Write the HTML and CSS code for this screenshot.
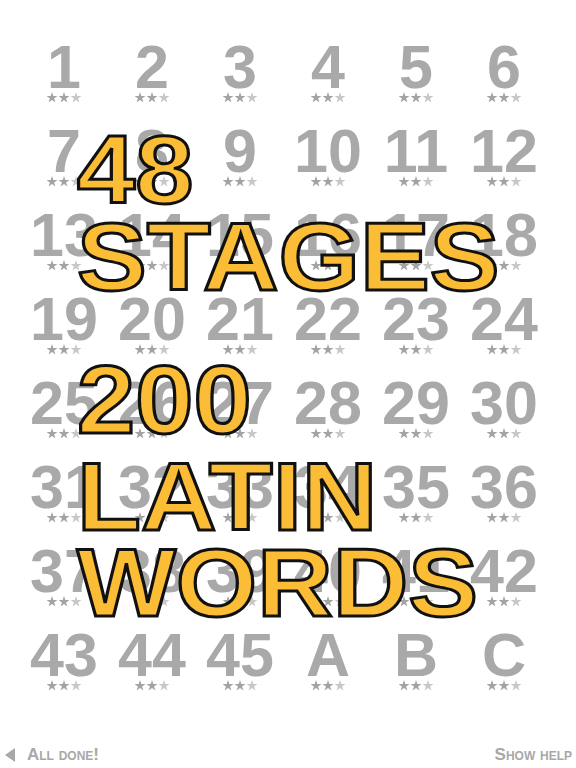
FILE: index.html
```html
<!DOCTYPE html>
<html>
<head>
<meta charset="utf-8">
<link rel="stylesheet" href="styles.css">
</head>
<body>
<div class="page">
  <div class="grid">
    <div class="cell"><div class="num">1</div><div class="st"><b></b><b></b><b class="d"></b></div></div>
    <div class="cell"><div class="num">2</div><div class="st"><b></b><b></b><b class="d"></b></div></div>
    <div class="cell"><div class="num">3</div><div class="st"><b></b><b></b><b class="d"></b></div></div>
    <div class="cell"><div class="num">4</div><div class="st"><b></b><b></b><b class="d"></b></div></div>
    <div class="cell"><div class="num">5</div><div class="st"><b></b><b></b><b class="d"></b></div></div>
    <div class="cell"><div class="num">6</div><div class="st"><b></b><b></b><b class="d"></b></div></div>
    <div class="cell"><div class="num">7</div><div class="st"><b></b><b></b><b class="d"></b></div></div>
    <div class="cell"><div class="num">8</div><div class="st"><b></b><b></b><b class="d"></b></div></div>
    <div class="cell"><div class="num">9</div><div class="st"><b></b><b></b><b class="d"></b></div></div>
    <div class="cell"><div class="num">10</div><div class="st"><b></b><b></b><b class="d"></b></div></div>
    <div class="cell"><div class="num">11</div><div class="st"><b></b><b></b><b class="d"></b></div></div>
    <div class="cell"><div class="num">12</div><div class="st"><b></b><b></b><b class="d"></b></div></div>
    <div class="cell"><div class="num">13</div><div class="st"><b></b><b></b><b class="d"></b></div></div>
    <div class="cell"><div class="num">14</div><div class="st"><b></b><b></b><b class="d"></b></div></div>
    <div class="cell"><div class="num">15</div><div class="st"><b></b><b></b><b class="d"></b></div></div>
    <div class="cell"><div class="num">16</div><div class="st"><b></b><b></b><b class="d"></b></div></div>
    <div class="cell"><div class="num">17</div><div class="st"><b></b><b></b><b class="d"></b></div></div>
    <div class="cell"><div class="num">18</div><div class="st"><b></b><b></b><b class="d"></b></div></div>
    <div class="cell"><div class="num">19</div><div class="st"><b></b><b></b><b class="d"></b></div></div>
    <div class="cell"><div class="num">20</div><div class="st"><b></b><b></b><b class="d"></b></div></div>
    <div class="cell"><div class="num">21</div><div class="st"><b></b><b></b><b class="d"></b></div></div>
    <div class="cell"><div class="num">22</div><div class="st"><b></b><b></b><b class="d"></b></div></div>
    <div class="cell"><div class="num">23</div><div class="st"><b></b><b></b><b class="d"></b></div></div>
    <div class="cell"><div class="num">24</div><div class="st"><b></b><b></b><b class="d"></b></div></div>
    <div class="cell"><div class="num">25</div><div class="st"><b></b><b></b><b class="d"></b></div></div>
    <div class="cell"><div class="num">26</div><div class="st"><b></b><b></b><b class="d"></b></div></div>
    <div class="cell"><div class="num">27</div><div class="st"><b></b><b></b><b class="d"></b></div></div>
    <div class="cell"><div class="num">28</div><div class="st"><b></b><b></b><b class="d"></b></div></div>
    <div class="cell"><div class="num">29</div><div class="st"><b></b><b></b><b class="d"></b></div></div>
    <div class="cell"><div class="num">30</div><div class="st"><b></b><b></b><b class="d"></b></div></div>
    <div class="cell"><div class="num">31</div><div class="st"><b></b><b></b><b class="d"></b></div></div>
    <div class="cell"><div class="num">32</div><div class="st"><b></b><b></b><b class="d"></b></div></div>
    <div class="cell"><div class="num">33</div><div class="st"><b></b><b></b><b class="d"></b></div></div>
    <div class="cell"><div class="num">34</div><div class="st"><b></b><b></b><b class="d"></b></div></div>
    <div class="cell"><div class="num">35</div><div class="st"><b></b><b></b><b class="d"></b></div></div>
    <div class="cell"><div class="num">36</div><div class="st"><b></b><b></b><b class="d"></b></div></div>
    <div class="cell"><div class="num">37</div><div class="st"><b></b><b></b><b class="d"></b></div></div>
    <div class="cell"><div class="num">38</div><div class="st"><b></b><b></b><b class="d"></b></div></div>
    <div class="cell"><div class="num">39</div><div class="st"><b></b><b></b><b class="d"></b></div></div>
    <div class="cell"><div class="num">40</div><div class="st"><b></b><b></b><b class="d"></b></div></div>
    <div class="cell"><div class="num">41</div><div class="st"><b></b><b></b><b class="d"></b></div></div>
    <div class="cell"><div class="num">42</div><div class="st"><b></b><b></b><b class="d"></b></div></div>
    <div class="cell"><div class="num">43</div><div class="st"><b></b><b></b><b class="d"></b></div></div>
    <div class="cell"><div class="num">44</div><div class="st"><b></b><b></b><b class="d"></b></div></div>
    <div class="cell"><div class="num">45</div><div class="st"><b></b><b></b><b class="d"></b></div></div>
    <div class="cell"><div class="num">A</div><div class="st"><b></b><b></b><b class="d"></b></div></div>
    <div class="cell"><div class="num">B</div><div class="st"><b></b><b></b><b class="d"></b></div></div>
    <div class="cell"><div class="num">C</div><div class="st"><b></b><b></b><b class="d"></b></div></div>
  </div>

  <div class="banner">
    <div class="line">48</div>
    <div class="line">STAGES</div>
    <div class="line l200">200</div>
    <div class="line llatin">LATIN</div>
    <div class="line lwords">WORDS</div>
  </div>

  <div class="bar">
    <div class="back"><span class="tri"></span><span class="lbl">All done!</span></div>
    <div class="help">Show help</div>
  </div>
</div>
</body>
</html>
```
FILE: styles.css
```css
html, body {
  margin: 0;
  padding: 0;
  background: #ffffff;
}
.page {
  position: relative;
  width: 576px;
  height: 768px;
  overflow: hidden;
  font-family: "Liberation Sans", Arial, sans-serif;
}
.grid {
  display: grid;
  grid-template-columns: repeat(6, 88px);
  grid-auto-rows: 84px;
  padding: 42px 0 0 20px;
}
.cell {
  display: flex;
  flex-direction: column;
  align-items: center;
}
.num {
  font-size: 61px;
  line-height: 50px;
  font-weight: bold;
  color: #a9a9a9;
}
.st {
  display: flex;
  gap: 1px;
  margin-top: 0;
}
.st b {
  display: block;
  width: 11px;
  height: 11px;
  background: #a3a3a3;
  clip-path: polygon(50% 0%, 62% 36%, 100% 36%, 69% 58%, 81% 95%, 50% 72%, 19% 95%, 31% 58%, 0% 36%, 38% 36%);
}
.st b.d {
  background: #c8c8c8;
}
.banner {
  position: absolute;
  left: 77px;
  top: 126px;
  font-size: 96px;
  font-weight: bold;
  line-height: 87px;
  color: #fcbd36;
  -webkit-text-stroke: 3px #111111;
  transform: scaleX(1.09);
  transform-origin: 0 0;
}
.l200 { margin-top: 56px; }
.llatin { margin-top: 10px; }
.lwords { margin-top: -1px; }
.bar {
  display: flex;
  justify-content: space-between;
  align-items: flex-end;
  padding: 32px 4px 0 5px;
  color: #a8a8a8;
  font-size: 17px;
  line-height: 17px;
  font-weight: bold;
  font-variant: small-caps;
}
.back {
  display: flex;
  align-items: center;
  gap: 12px;
}
.tri {
  width: 0;
  height: 0;
  border-top: 7.5px solid transparent;
  border-bottom: 7.5px solid transparent;
  border-right: 10px solid #a8a8a8;
}
```
